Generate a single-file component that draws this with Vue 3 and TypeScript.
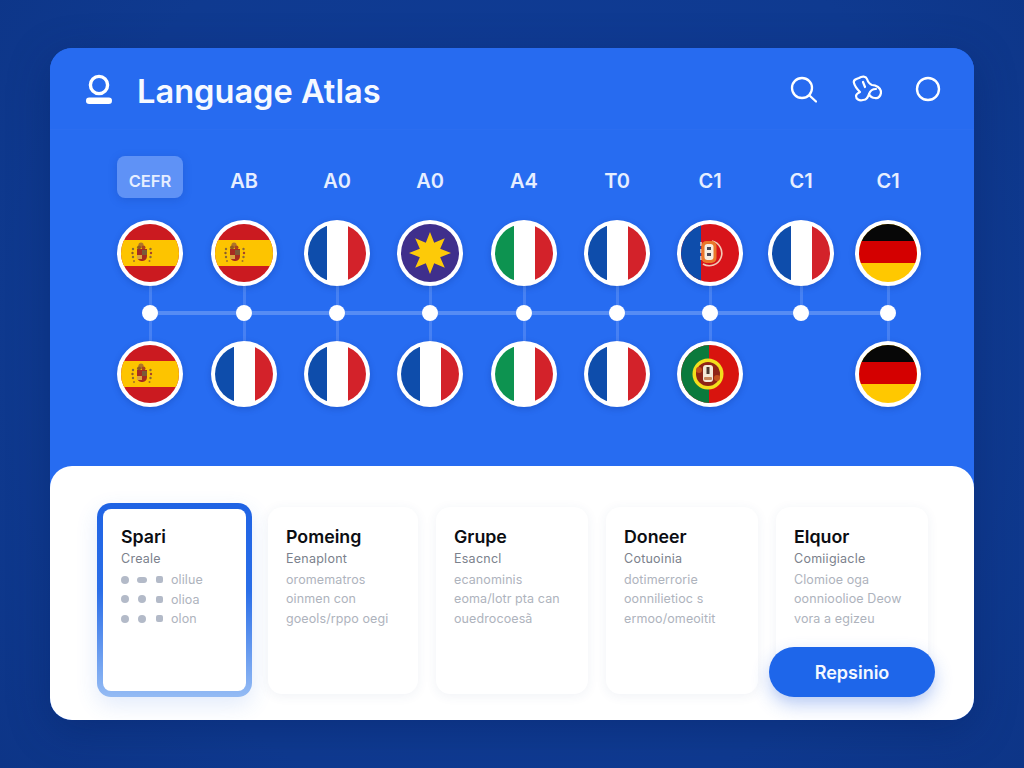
<script setup lang="ts">
type Flag = 'es' | 'es2' | 'es3' | 'fr' | 'it' | 'de' | 'star' | 'ptA' | 'ptB' | null

interface Column {
  label: string
  width: number
  top: Flag
  bottom: Flag
  active?: boolean
}

interface Card {
  title: string
  sub: string
  lines: string[]
  active?: boolean
}

const columns: Column[] = [
  { label: 'CEFR', width: 94, top: 'es', bottom: 'es3', active: true },
  { label: 'AB', width: 94, top: 'es2', bottom: 'fr' },
  { label: 'A0', width: 92, top: 'fr', bottom: 'fr' },
  { label: 'A0', width: 94, top: 'star', bottom: 'fr' },
  { label: 'A4', width: 94, top: 'it', bottom: 'it' },
  { label: 'T0', width: 92, top: 'fr', bottom: 'fr' },
  { label: 'C1', width: 94, top: 'ptA', bottom: 'ptB' },
  { label: 'C1', width: 88, top: 'fr', bottom: null },
  { label: 'C1', width: 86, top: 'de', bottom: 'de' },
]

const cards: Card[] = [
  { title: 'Spari', sub: 'Creale', lines: ['olilue', 'olioa', 'olon'], active: true },
  { title: 'Pomeing', sub: 'Eenaplont', lines: ['oromematros', 'oinmen con', 'goeols/rppo oegi'] },
  { title: 'Grupe', sub: 'Esacncl', lines: ['ecanominis', 'eoma/lotr pta can', 'ouedrocoesã'] },
  { title: 'Doneer', sub: 'Cotuoinia', lines: ['dotimerrorie', 'oonnilietioc s', 'ermoo/omeoitit'] },
  { title: 'Elquor', sub: 'Comiigiacle', lines: ['Clomioe oga', 'oonnioolioe Deow', 'vora a egizeu'] },
]

const gridColumns = columns.map((c) => `${c.width}px`).join(' ')

const starPoints = Array.from({ length: 16 }, (_, i) => {
  const radius = i % 2 === 0 ? 21 : 11
  const angle = (Math.PI * i) / 8 - Math.PI / 2
  return `${(29 + radius * Math.cos(angle)).toFixed(1)},${(29 + radius * Math.sin(angle)).toFixed(1)}`
}).join(' ')

const flagsOf = (col: Column): Flag[] => [col.top, col.bottom]

const crestX = (f: Flag): number => (f === 'es2' ? 20 : 21)
</script>

<template>
  <div class="page">
    <main class="panel">
      <header class="topbar">
        <div class="brand">
          <svg class="brand-icon" width="28" height="32" viewBox="0 0 28 32" fill="none">
            <circle cx="14" cy="11" r="8.6" stroke="#fff" stroke-width="3.4" />
            <rect x="1" y="23.5" width="26" height="6.5" rx="3.2" fill="#fff" />
          </svg>
          <h1 class="title">Language Atlas</h1>
        </div>
        <nav class="tools">
          <svg width="28" height="28" viewBox="0 0 28 28" fill="none" stroke="#fff" stroke-width="2.3" stroke-linecap="round">
            <circle cx="13" cy="13" r="10" />
            <path d="M20.5 20.5 L27 26.5" />
          </svg>
          <svg width="32" height="28" viewBox="0 0 32 28" fill="none" stroke="#fff" stroke-width="2.2" stroke-linecap="round" stroke-linejoin="round">
            <path d="M4 8 C3 5 6 4 9 3 C12 1 16 1 17 4 C18 7 19 9 22 10 C26 10 31 13 31 17 C31 21 28 24 25 23 C22 23 20 21 19 19 C18 22 17 25 13 25 C9 26 6 24 6 21 C6 19 8 18 10 17 C8 15 5 12 4 8 Z" />
            <path d="M13 7 L15 12" />
            <path d="M19 19 C20 16 23 14 26 14" />
          </svg>
          <svg width="26" height="26" viewBox="0 0 26 26" fill="none" stroke="#fff" stroke-width="2.4">
            <circle cx="13" cy="13" r="11" />
          </svg>
        </nav>
      </header>

      <section class="stage">
        <div class="rail"></div>
        <div class="grid" :style="{ gridTemplateColumns: gridColumns }">
          <div v-for="(col, ci) in columns" :key="ci" class="col">
            <div class="label" :class="{ 'label-active': col.active }">{{ col.label }}</div>
            <template v-for="(flag, fi) in flagsOf(col)" :key="fi">
              <template v-if="fi === 1">
                <div class="stem"></div>
                <div class="node"></div>
                <div v-if="flag" class="stem stem-low"></div>
              </template>
              <div v-if="flag" class="flag">
                <svg width="58" height="58" viewBox="0 0 58 58">
                  <template v-if="flag === 'es' || flag === 'es2' || flag === 'es3'">
                    <rect width="58" height="58" fill="#cb1a20" />
                    <rect y="16" width="58" height="26" fill="#fdc400" />
                    <g :transform="`translate(${crestX(flag)} 29)`">
                      <circle cx="-1" cy="-8" r="2.6" fill="#b0742a" />
                      <circle cx="-3" cy="-5.5" r="2" fill="#8f5a20" />
                      <circle cx="1.5" cy="-5.5" r="2" fill="#a8451f" />
                      <path d="M-5 -4 H5 V3 C5 7 2 8 0 8 C-2 8 -5 7 -5 3 Z" fill="#a62c20" />
                      <rect x="0" y="-3" width="5" height="5" fill="#7b5a38" />
                      <rect x="-5" y="2" width="5" height="4" fill="#d9a441" />
                      <circle cx="-9" cy="-4" r="1.2" fill="#8a6a3a" />
                      <circle cx="-9.5" cy="0" r="1.2" fill="#8a5a2a" />
                      <circle cx="-9" cy="4" r="1.2" fill="#8a6a3a" />
                      <circle cx="-8" cy="8" r="1" fill="#a0702a" />
                      <circle cx="8.5" cy="-4" r="1.2" fill="#8a6a3a" />
                      <circle cx="9" cy="0" r="1.2" fill="#a5402a" />
                      <circle cx="8.5" cy="4" r="1.2" fill="#8a6a3a" />
                      <circle cx="7.5" cy="8" r="1" fill="#a0702a" />
                    </g>
                  </template>
                  <template v-else-if="flag === 'fr'">
                    <rect width="58" height="58" fill="#fff" />
                    <rect width="19" height="58" fill="#0e4dab" />
                    <rect x="40" width="18" height="58" fill="#d3222a" />
                  </template>
                  <template v-else-if="flag === 'it'">
                    <rect width="58" height="58" fill="#fff" />
                    <rect width="19" height="58" fill="#0d9350" />
                    <rect x="40" width="18" height="58" fill="#d3222a" />
                  </template>
                  <template v-else-if="flag === 'de'">
                    <rect width="58" height="58" fill="#ffc800" />
                    <rect width="58" height="17" fill="#070707" />
                    <rect y="17" width="58" height="22" fill="#d40000" />
                  </template>
                  <template v-else-if="flag === 'star'">
                    <rect width="58" height="58" fill="#3f2f8c" />
                    <polygon :points="starPoints" fill="#fdca08" />
                  </template>
                  <template v-else-if="flag === 'ptA'">
                    <rect width="58" height="58" fill="#d8141a" />
                    <rect width="20" height="58" fill="#0e4dab" />
                    <path d="M31 17 A12.5 12.5 0 1 1 22 40" fill="none" stroke="#f1c9b6" stroke-width="1.6" />
                    <path d="M20 18 V39" fill="none" stroke="#f4e2d6" stroke-width="1.4" stroke-dasharray="4 3" />
                    <rect x="20.5" y="17" width="15" height="22" rx="5" fill="#e9772a" />
                    <rect x="23.5" y="20" width="9" height="16" rx="3" fill="#f7efe2" />
                    <rect x="26" y="23" width="4" height="3" fill="#4a4a58" />
                    <rect x="26" y="29" width="4" height="3" fill="#4a4a58" />
                  </template>
                  <template v-else-if="flag === 'ptB'">
                    <rect width="58" height="58" fill="#d8140e" />
                    <rect width="28" height="58" fill="#0b7a3c" />
                    <circle cx="27" cy="29" r="15.5" fill="#f3df1c" />
                    <circle cx="27" cy="29" r="12" fill="#8f2416" />
                    <circle cx="18" cy="25" r="3" fill="#c4501c" />
                    <circle cx="36" cy="33" r="3" fill="#c4501c" />
                    <rect x="22" y="20" width="10" height="17" rx="3" fill="#f4ead6" />
                    <rect x="25.5" y="22" width="3" height="7" fill="#4a3a30" />
                    <rect x="23" y="32" width="8" height="3" rx="1" fill="#c98a5c" />
                  </template>
                </svg>
              </div>
            </template>
          </div>
        </div>
      </section>

      <section class="sheet">
        <article v-for="card in cards" :key="card.title" class="card" :class="{ 'card-active': card.active }">
          <h2 class="card-title">{{ card.title }}</h2>
          <p class="card-sub">{{ card.sub }}</p>
          <p v-for="(line, li) in card.lines" :key="line" class="card-line">
            <span v-if="card.active" class="dots">
              <i class="dot"></i>
              <i class="dot" :class="{ 'dot-pill': li === 0 }"></i>
              <i class="dot dot-square"></i>
            </span>
            {{ line }}
          </p>
        </article>
        <button class="cta" type="button">Repsinio</button>
      </section>
    </main>
  </div>
</template>

<style scoped>
.page {
  width: 1024px;
  height: 768px;
  box-sizing: border-box;
  padding: 48px 50px;
  background: radial-gradient(circle at 50% 45%, #0f3c98 0%, #0f3a90 70%, #0d3587 100%);
  font-family: Inter, "Liberation Sans", sans-serif;
  overflow: hidden;
}

.panel {
  position: relative;
  width: 924px;
  height: 672px;
  border-radius: 22px;
  overflow: hidden;
  background: #276cf1;
  display: flex;
  flex-direction: column;
  box-shadow: 0 10px 40px rgba(6, 28, 90, 0.35);
}

.topbar {
  height: 82px;
  flex: none;
  display: flex;
  align-items: center;
  justify-content: space-between;
  padding: 0 33px 0 35px;
  background: #276bf0;
  border-bottom: 1px solid rgba(255, 255, 255, 0.02);
  box-sizing: border-box;
}

.brand {
  display: flex;
  align-items: center;
  gap: 24px;
}

.brand-icon {
  margin-top: 3px;
}

.title {
  margin: 6px 0 0;
  color: #f6f9ff;
  font-size: 32.6px;
  font-weight: 600;
  line-height: 1;
}

.tools {
  display: flex;
  align-items: center;
  gap: 33px;
}

.stage {
  position: relative;
  height: 336px;
  flex: none;
}

.rail {
  position: absolute;
  left: 100px;
  right: 86px;
  top: 181px;
  height: 4px;
  background: rgba(255, 255, 255, 0.22);
}

.grid {
  position: relative;
  display: grid;
  margin-left: 53px;
  padding-top: 26px;
}

.col {
  display: flex;
  flex-direction: column;
  align-items: center;
}

.label {
  height: 42px;
  box-sizing: border-box;
  padding-top: 8px;
  display: flex;
  align-items: center;
  justify-content: center;
  color: #e6eeff;
  font-size: 20px;
  font-weight: 600;
  margin-bottom: 22px;
}

.label-active {
  width: 66px;
  border-radius: 8px;
  background: #5f92f6;
  font-size: 16.5px;
  box-shadow: 0 2px 8px rgba(20, 60, 160, 0.25);
}

.flag {
  width: 66px;
  height: 66px;
  flex: none;
  box-sizing: border-box;
  padding: 4px;
  border-radius: 50%;
  background: #fff;
  box-shadow: 0 2px 6px rgba(10, 40, 120, 0.25);
}

.flag svg {
  display: block;
  border-radius: 50%;
}

.stem {
  width: 3px;
  height: 19px;
  flex: none;
  background: rgba(255, 255, 255, 0.15);
}

.stem-low {
  height: 20px;
}

.node {
  width: 16px;
  height: 16px;
  flex: none;
  border-radius: 50%;
  background: #fff;
}

.sheet {
  position: relative;
  flex: 1;
  display: flex;
  align-items: center;
  gap: 18px;
  padding: 37px 0 23px 47px;
  box-sizing: border-box;
  background: #fff;
  border-radius: 22px 22px 0 0;
}

.card {
  width: 152px;
  height: 187px;
  flex: none;
  box-sizing: border-box;
  padding: 20px 18px;
  background: #fff;
  border-radius: 14px;
  box-shadow: 0 2px 12px rgba(40, 70, 130, 0.07);
}

.card:nth-child(2) {
  width: 150px;
}

.card-active {
  width: 155px;
  height: 194px;
  margin-right: -2px;
  padding: 18px;
  border: 6px solid transparent;
  background:
    linear-gradient(#fff, #fff) padding-box,
    linear-gradient(180deg, #1f63e4 0%, #2a6ee8 45%, #94bbf4 100%) border-box;
  box-shadow: 0 8px 22px rgba(50, 110, 230, 0.14);
}

.card-title {
  margin: 0;
  color: #0b0d12;
  font-size: 17.8px;
  font-weight: 600;
  line-height: 20px;
}

.card-sub {
  margin: 3px 0 0;
  color: #7b818c;
  font-size: 12.5px;
  letter-spacing: 0.25px;
  line-height: 18px;
}

.card-line {
  margin: 2px 0 0;
  color: #aeb3bd;
  font-size: 12.5px;
  line-height: 17.5px;
  white-space: nowrap;
  display: flex;
  align-items: center;
  letter-spacing: 0.1px;
}

.card-sub + .card-line {
  margin-top: 3px;
}

.dots {
  display: inline-grid;
  grid-template-columns: 8px 10px 8px;
  align-items: center;
  justify-items: center;
  gap: 8px;
  width: 42px;
  margin-right: 8px;
}

.dot {
  display: block;
  width: 8px;
  height: 8px;
  border-radius: 50%;
  background: #b3bac8;
}

.dot-pill {
  width: 10px;
  height: 6px;
  border-radius: 3px;
}

.dot-square {
  width: 7px;
  height: 7px;
  border-radius: 2px;
}

.cta {
  position: absolute;
  right: 39px;
  bottom: 23px;
  width: 166px;
  height: 50px;
  border: none;
  border-radius: 25px;
  background: #1e66ea;
  color: #f4f8ff;
  font-family: inherit;
  font-size: 18px;
  font-weight: 600;
  box-shadow: 0 8px 18px rgba(40, 100, 230, 0.3);
}
</style>
